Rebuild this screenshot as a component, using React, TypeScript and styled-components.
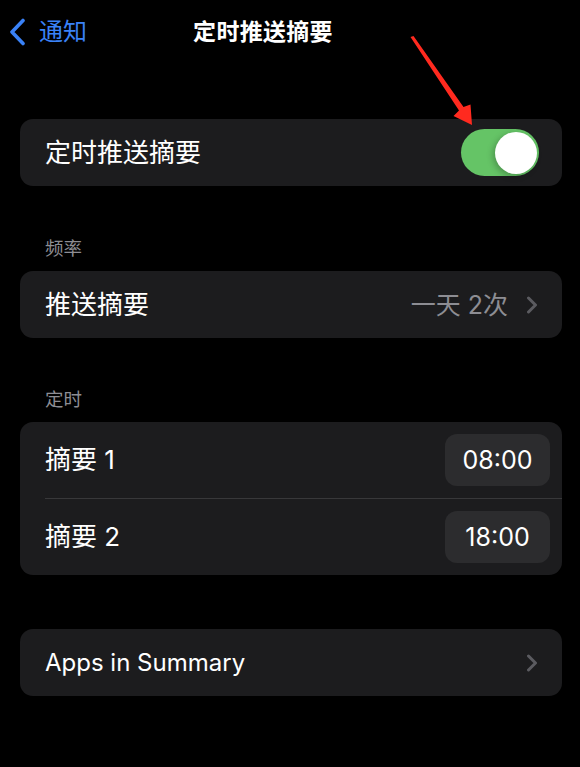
import React from 'react';
import styled, { createGlobalStyle } from 'styled-components';

const GlobalStyle = createGlobalStyle`
  body {
    margin: 0;
    background: #000000;
    font-family: 'Inter', 'Noto Sans CJK SC', sans-serif;
    color: #ffffff;
  }
`;

const Screen = styled.div`
  position: relative;
  width: 580px;
  height: 767px;
  background: #000000;
  overflow: hidden;
`;

const NavBar = styled.div`
  display: grid;
  grid-template-columns: 1fr auto 1fr;
  align-items: center;
  height: 64px;
  padding-right: 54px;
`;

const BackButton = styled.div`
  display: flex;
  align-items: center;
  gap: 13px;
  padding-left: 9px;
  color: #3a82f7;
  font-size: 24px;
  line-height: 28px;
`;

const NavTitle = styled.div`
  font-size: 23px;
  font-weight: 700;
  line-height: 28px;
  letter-spacing: 0.3px;
`;

const Content = styled.div`
  padding: 0 18px 0 20px;
`;

const Card = styled.div<{ $top: number }>`
  margin-top: ${p => p.$top}px;
  background: #1c1c1e;
  border-radius: 13px;
  overflow: hidden;
`;

const GroupHeader = styled.div<{ $top: number }>`
  padding: ${p => p.$top}px 0 0 25px;
  margin-bottom: 12px;
  font-size: 18.5px;
  line-height: 22px;
  color: #8d8d93;
`;

const Row = styled.div<{ $h: number; $pr: number }>`
  display: flex;
  align-items: center;
  justify-content: space-between;
  height: ${p => p.$h}px;
  padding: 0 ${p => p.$pr}px 0 25px;
`;

const Label = styled.div<{ $latin?: boolean }>`
  font-size: ${p => (p.$latin ? 24 : 26)}px;
  line-height: 30px;
  color: #ffffff;
`;

const Separator = styled.div`
  height: 1px;
  margin-left: 25px;
  background: #38383a;
`;

const Trailing = styled.div`
  display: flex;
  align-items: center;
  gap: 18px;
`;

const Value = styled.div`
  font-size: 25px;
  line-height: 30px;
  color: #8d8d93;
`;

const Toggle = styled.div`
  position: relative;
  width: 78px;
  height: 47px;
  border-radius: 24px;
  background: #65c466;
`;

const Knob = styled.div`
  position: absolute;
  top: 2.5px;
  right: 2.5px;
  width: 42px;
  height: 42px;
  border-radius: 50%;
  background: #ffffff;
  box-shadow: -2px 2px 6px rgba(0, 0, 0, 0.25);
`;

const TimePill = styled.div`
  display: flex;
  align-items: center;
  justify-content: center;
  width: 105px;
  height: 52px;
  border-radius: 12px;
  background: #2c2c2e;
  font-size: 25px;
  color: #ffffff;
`;

const ArrowOverlay = styled.svg`
  position: absolute;
  left: 0;
  top: 0;
  pointer-events: none;
`;

function Chevron() {
  return (
    <svg width="12" height="18" viewBox="0 0 12 18">
      <path d="M2.5 2 L9.5 9 L2.5 16" fill="none" stroke="#5b5b60" strokeWidth="3" strokeLinecap="round" strokeLinejoin="round" />
    </svg>
  );
}

function BackChevron() {
  return (
    <svg width="17" height="28" viewBox="0 0 17 28">
      <path d="M14 2.5 L3 14 L14 25.5" fill="none" stroke="#3a82f7" strokeWidth="3.6" strokeLinecap="round" strokeLinejoin="round" />
    </svg>
  );
}

const times = [
  { id: 'd1', label: '摘要 1', time: '08:00' },
  { id: 'd2', label: '摘要 2', time: '18:00' },
];

export default function App() {
  return (
    <Screen>
      <GlobalStyle />
      <NavBar>
        <BackButton>
          <BackChevron />
          通知
        </BackButton>
        <NavTitle>定时推送摘要</NavTitle>
        <div />
      </NavBar>
      <Content>
        <Card $top={55}>
          <Row $h={67} $pr={23}>
            <Label>定时推送摘要</Label>
            <Toggle>
              <Knob />
            </Toggle>
          </Row>
        </Card>

        <GroupHeader $top={51}>频率</GroupHeader>
        <Card $top={0}>
          <Row $h={67} $pr={24}>
            <Label>推送摘要</Label>
            <Trailing>
              <Value>一天 2次</Value>
              <Chevron />
            </Trailing>
          </Row>
        </Card>

        <GroupHeader $top={50}>定时</GroupHeader>
        <Card $top={0}>
          {times.map((t, i) => (
            <React.Fragment key={t.id}>
              {i > 0 && <Separator />}
              <Row $h={76} $pr={12}>
                <Label>{t.label}</Label>
                <TimePill>{t.time}</TimePill>
              </Row>
            </React.Fragment>
          ))}
        </Card>

        <Card $top={54}>
          <Row $h={67} $pr={24}>
            <Label $latin>Apps in Summary</Label>
            <Chevron />
          </Row>
        </Card>
      </Content>

      <ArrowOverlay width="580" height="767" viewBox="0 0 580 767">
        <polygon points="410.5,37 413.5,36 463.5,107 470.5,104.5 472,125 453.5,116 459,110.5" fill="#ff2a1f" />
      </ArrowOverlay>
    </Screen>
  );
}
